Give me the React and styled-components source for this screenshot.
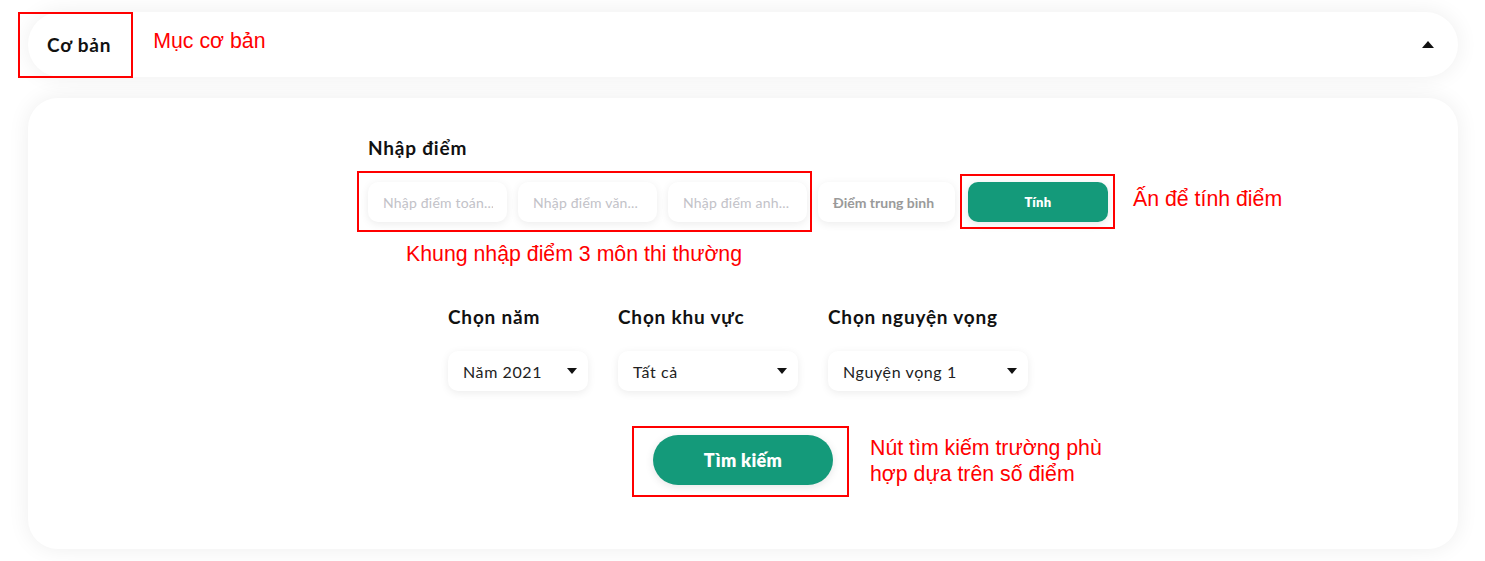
import React from "react";
import styled, { createGlobalStyle } from "styled-components";

const GlobalStyle = createGlobalStyle`
  body {
    margin: 0;
    background: #ffffff;
    font-family: "Lato", "Noto Sans", sans-serif;
  }
`;

const Page = styled.div`
  width: 1485px;
  height: 561px;
  padding: 12px 27px 0 28px;
  box-sizing: border-box;
  overflow: hidden;
`;

const TopBar = styled.div`
  height: 65px;
  background: #fff;
  border-radius: 33px;
  box-shadow: 0 0 22px rgba(0, 0, 0, 0.07);
  display: flex;
  align-items: center;
  padding: 0 24px 0 19px;
`;

const Tab = styled.div`
  position: relative;
  font-size: 19px;
  letter-spacing: 0.8px;
  line-height: 22px;
  font-weight: 700;
  color: #111;
  &::after {
    content: "";
    position: absolute;
    left: -29px;
    top: -22px;
    width: 115px;
    height: 66px;
    border: 2px solid #f00;
    box-sizing: border-box;
  }
`;

const Note = styled.span`
  font-family: "Liberation Sans", Arial, sans-serif;
  font-size: 21.3px;
  line-height: 26px;
  color: #f00;
  margin-left: ${(p) => p.$left || 0}px;
  margin-top: ${(p) => p.$top || 0}px;
  margin-bottom: ${(p) => p.$bottom || 0}px;
`;

const Caret = styled.svg`
  margin-left: auto;
`;

const Card = styled.div`
  margin-top: 21px;
  height: 451px;
  background: #fff;
  border-radius: 30px;
  box-shadow: 0 0 22px rgba(0, 0, 0, 0.07);
  padding: 39px 0 0 340px;
  box-sizing: border-box;
`;

const Heading = styled.div`
  font-size: 19px;
  letter-spacing: 0.8px;
  font-weight: 700;
  color: #111;
  line-height: 22px;
`;

const ScoreRow = styled.div`
  display: flex;
  align-items: center;
  margin-top: 23px;
`;

const Inputs = styled.div`
  position: relative;
  display: flex;
  gap: 11px;
  &::after {
    content: "";
    position: absolute;
    left: -11px;
    top: -11px;
    right: -5px;
    bottom: -10px;
    border: 2px solid #f00;
    box-sizing: border-box;
    pointer-events: none;
  }
`;

const Field = styled.input`
  width: 139px;
  height: 40px;
  box-sizing: border-box;
  border: none;
  outline: none;
  border-radius: 10px;
  background: #fff;
  box-shadow: 0 2px 9px rgba(0, 0, 0, 0.08);
  padding: 0 14px 0 15px;
  font-family: "Lato", sans-serif;
  font-size: 14px;
  letter-spacing: 0.2px;
  color: #333;
  &::placeholder {
    color: #c2c2c8;
  }
`;

const Avg = styled.div`
  width: 137px;
  height: 40px;
  margin-left: 11px;
  border-radius: 10px;
  background: #fff;
  box-shadow: 0 2px 9px rgba(0, 0, 0, 0.08);
  display: flex;
  align-items: center;
  padding-left: 15px;
  box-sizing: border-box;
  font-size: 14px;
  font-weight: 700;
  color: #9a9a9a;
`;

const Boxed = styled.div`
  position: relative;
  margin-left: ${(p) => p.$left || 0}px;
  &::after {
    content: "";
    position: absolute;
    left: ${(p) => p.$inset[0]}px;
    top: ${(p) => p.$inset[1]}px;
    right: ${(p) => p.$inset[2]}px;
    bottom: ${(p) => p.$inset[3]}px;
    border: 2px solid #f00;
    pointer-events: none;
  }
`;

const GreenButton = styled.button`
  width: ${(p) => p.$w}px;
  height: ${(p) => p.$h}px;
  border: none;
  border-radius: ${(p) => p.$r}px;
  background: #149a7a;
  color: #fff;
  font-family: "Lato", sans-serif;
  font-weight: 800;
  font-size: ${(p) => p.$size}px;
  letter-spacing: 0.3px;
  box-shadow: 0 2px 8px rgba(0, 0, 0, 0.1);
  cursor: pointer;
  display: block;
`;

const Filters = styled.div`
  display: flex;
  gap: 30px;
  margin: 39px 0 0 80px;
`;

const Filter = styled.div`
  display: flex;
  flex-direction: column;
`;

const Select = styled.div`
  width: ${(p) => p.$w}px;
  height: 40px;
  margin-top: 23px;
  box-sizing: border-box;
  border-radius: 10px;
  background: #fff;
  box-shadow: 0 2px 9px rgba(0, 0, 0, 0.08);
  display: flex;
  align-items: center;
  justify-content: space-between;
  padding: 0 11px 0 15px;
  font-size: 16px;
  letter-spacing: 0.6px;
  color: #222;
`;

const SearchRow = styled.div`
  display: flex;
  align-items: flex-start;
  margin: 44px 0 0 285px;
`;

const Down = () => (
  <svg width="10" height="6" viewBox="0 0 10 6">
    <path d="M0 0h10L5 6z" fill="#111" />
  </svg>
);

export default function App() {
  return (
    <>
      <GlobalStyle />
      <Page>
        <TopBar>
          <Tab>Cơ bản</Tab>
          <Note $left={42} $bottom={8}>
            Mục cơ bản
          </Note>
          <Caret width="12" height="7" viewBox="0 0 12 7">
            <path d="M0 7h12L6 0z" fill="#111" />
          </Caret>
        </TopBar>
        <Card>
          <Heading>Nhập điểm</Heading>
          <ScoreRow>
            <Inputs>
              <Field placeholder="Nhập điểm toán..." />
              <Field placeholder="Nhập điểm văn..." />
              <Field placeholder="Nhập điểm anh..." />
            </Inputs>
            <Avg>Điểm trung bình</Avg>
            <Boxed $left={13} $inset={[-8, -8, -7, -7]}>
              <GreenButton $w={140} $h={40} $r={10} $size={13}>
                Tính
              </GreenButton>
            </Boxed>
            <Note $left={25} $bottom={6}>
              Ấn để tính điểm
            </Note>
          </ScoreRow>
          <Note as="div" $left={38} $top={19}>
            Khung nhập điểm 3 môn thi thường
          </Note>
          <Filters>
            <Filter>
              <Heading>Chọn năm</Heading>
              <Select $w={140}>
                Năm 2021 <Down />
              </Select>
            </Filter>
            <Filter>
              <Heading>Chọn khu vực</Heading>
              <Select $w={180}>
                Tất cả <Down />
              </Select>
            </Filter>
            <Filter>
              <Heading>Chọn nguyện vọng</Heading>
              <Select $w={200}>
                Nguyện vọng 1 <Down />
              </Select>
            </Filter>
          </Filters>
          <SearchRow>
            <Boxed $inset={[-21, -9, -16, -12]}>
              <GreenButton $w={180} $h={50} $r={25} $size={18}>
                Tìm kiếm
              </GreenButton>
            </Boxed>
            <Note as="div" $left={37}>
              Nút tìm kiếm trường phù
              <br />
              hợp dựa trên số điểm
            </Note>
          </SearchRow>
        </Card>
      </Page>
    </>
  );
}
